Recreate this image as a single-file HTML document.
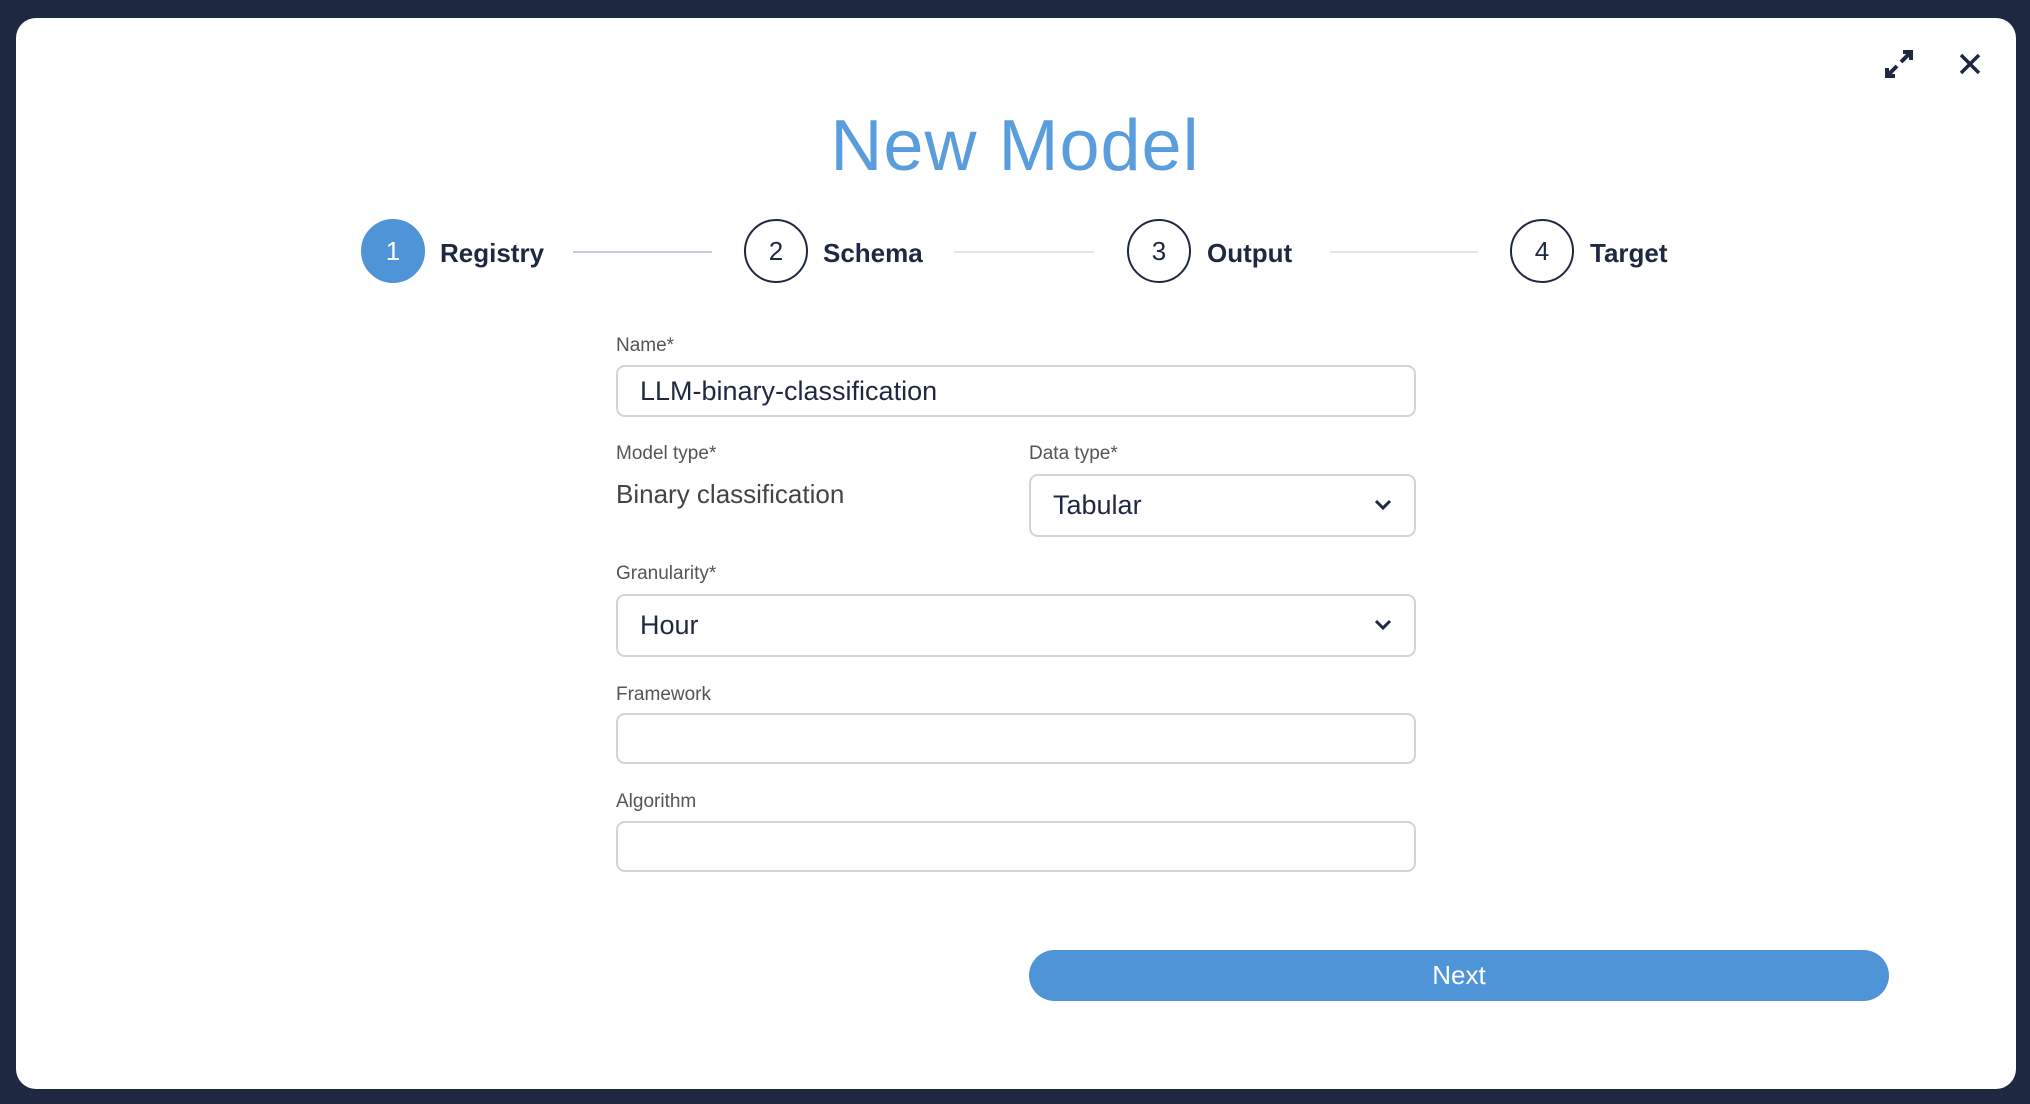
<!DOCTYPE html>
<html><head><meta charset="utf-8"><style>
*{box-sizing:border-box;margin:0;padding:0}
body{width:2030px;height:1104px;background:#1e2840;font-family:"Liberation Sans",sans-serif;position:relative;overflow:hidden}
.modal{position:absolute;left:16px;top:18px;width:2000px;height:1071px;background:#fff;border-radius:20px}
.abs{position:absolute}
h1{position:absolute;left:0;width:2030px;top:105px;text-align:center;font-weight:300;font-size:72px;color:#5a9ddc;letter-spacing:1px}
.circ{position:absolute;width:64px;height:64px;border-radius:50%;border:2px solid #1e2840;color:#1e2840;font-size:26px;display:flex;align-items:center;justify-content:center;top:219px}
.step{position:absolute;top:238px;font-size:26px;font-weight:bold;color:#1e2840}
.line{position:absolute;top:251px;height:2px;background:#c9ccd8}
.lbl{position:absolute;left:616px;font-size:19px;color:#555}
.inp{position:absolute;border:2px solid #d4d4d4;border-radius:9px;font-size:27px;color:#1e2840;padding-left:22px;display:flex;align-items:center}
.chev{position:absolute;right:22px;top:50%;margin-top:-7px}
</style></head><body>
<div class="modal"></div>
<svg class="abs" style="left:1884px;top:49px" width="30" height="30" viewBox="0 0 30 30"><path d="M17 13 L26 4 M19 3 H27 V11 M13 17 L4 26 M3 19 V27 H11" stroke="#1e2840" stroke-width="4" fill="none"/></svg>
<svg class="abs" style="left:1958px;top:52px" width="24" height="24" viewBox="0 0 24 24"><path d="M3 3 L21 21 M21 3 L3 21" stroke="#1e2840" stroke-width="3.5"/></svg>
<h1>New Model</h1>
<div class="circ" style="left:361px;background:#4f94d7;border-color:#4f94d7;color:#fff">1</div>
<div class="step" style="left:440px">Registry</div>
<div class="line" style="left:573px;width:139px"></div>
<div class="circ" style="left:744px">2</div>
<div class="step" style="left:823px">Schema</div>
<div class="line" style="left:954px;width:140px;background:#e3e4ea"></div>
<div class="circ" style="left:1127px">3</div>
<div class="step" style="left:1207px">Output</div>
<div class="line" style="left:1330px;width:148px;background:#e3e4ea"></div>
<div class="circ" style="left:1510px">4</div>
<div class="step" style="left:1590px">Target</div>

<div class="lbl" style="top:335px">Name*</div>
<div class="inp" style="left:616px;top:365px;width:800px;height:52px">LLM-binary-classification</div>
<div class="lbl" style="top:443px">Model type*</div>
<div class="abs" style="left:616px;top:479px;font-size:26px;color:#444">Binary classification</div>
<div class="lbl" style="top:443px;left:1029px">Data type*</div>
<div class="inp" style="left:1029px;top:474px;width:387px;height:63px">Tabular<svg class="chev" width="18" height="12" viewBox="0 0 18 12"><path d="M2 2 L9 9 L16 2" stroke="#1e2840" stroke-width="3" fill="none"/></svg></div>
<div class="lbl" style="top:563px">Granularity*</div>
<div class="inp" style="left:616px;top:594px;width:800px;height:63px">Hour<svg class="chev" width="18" height="12" viewBox="0 0 18 12"><path d="M2 2 L9 9 L16 2" stroke="#1e2840" stroke-width="3" fill="none"/></svg></div>
<div class="lbl" style="top:684px">Framework</div>
<div class="inp" style="left:616px;top:713px;width:800px;height:51px"></div>
<div class="lbl" style="top:791px">Algorithm</div>
<div class="inp" style="left:616px;top:821px;width:800px;height:51px"></div>
<div class="abs" style="left:1029px;top:950px;width:860px;height:51px;border-radius:26px;background:#4f94d7;color:#fff;font-size:26px;display:flex;align-items:center;justify-content:center">Next</div>
</body></html>
